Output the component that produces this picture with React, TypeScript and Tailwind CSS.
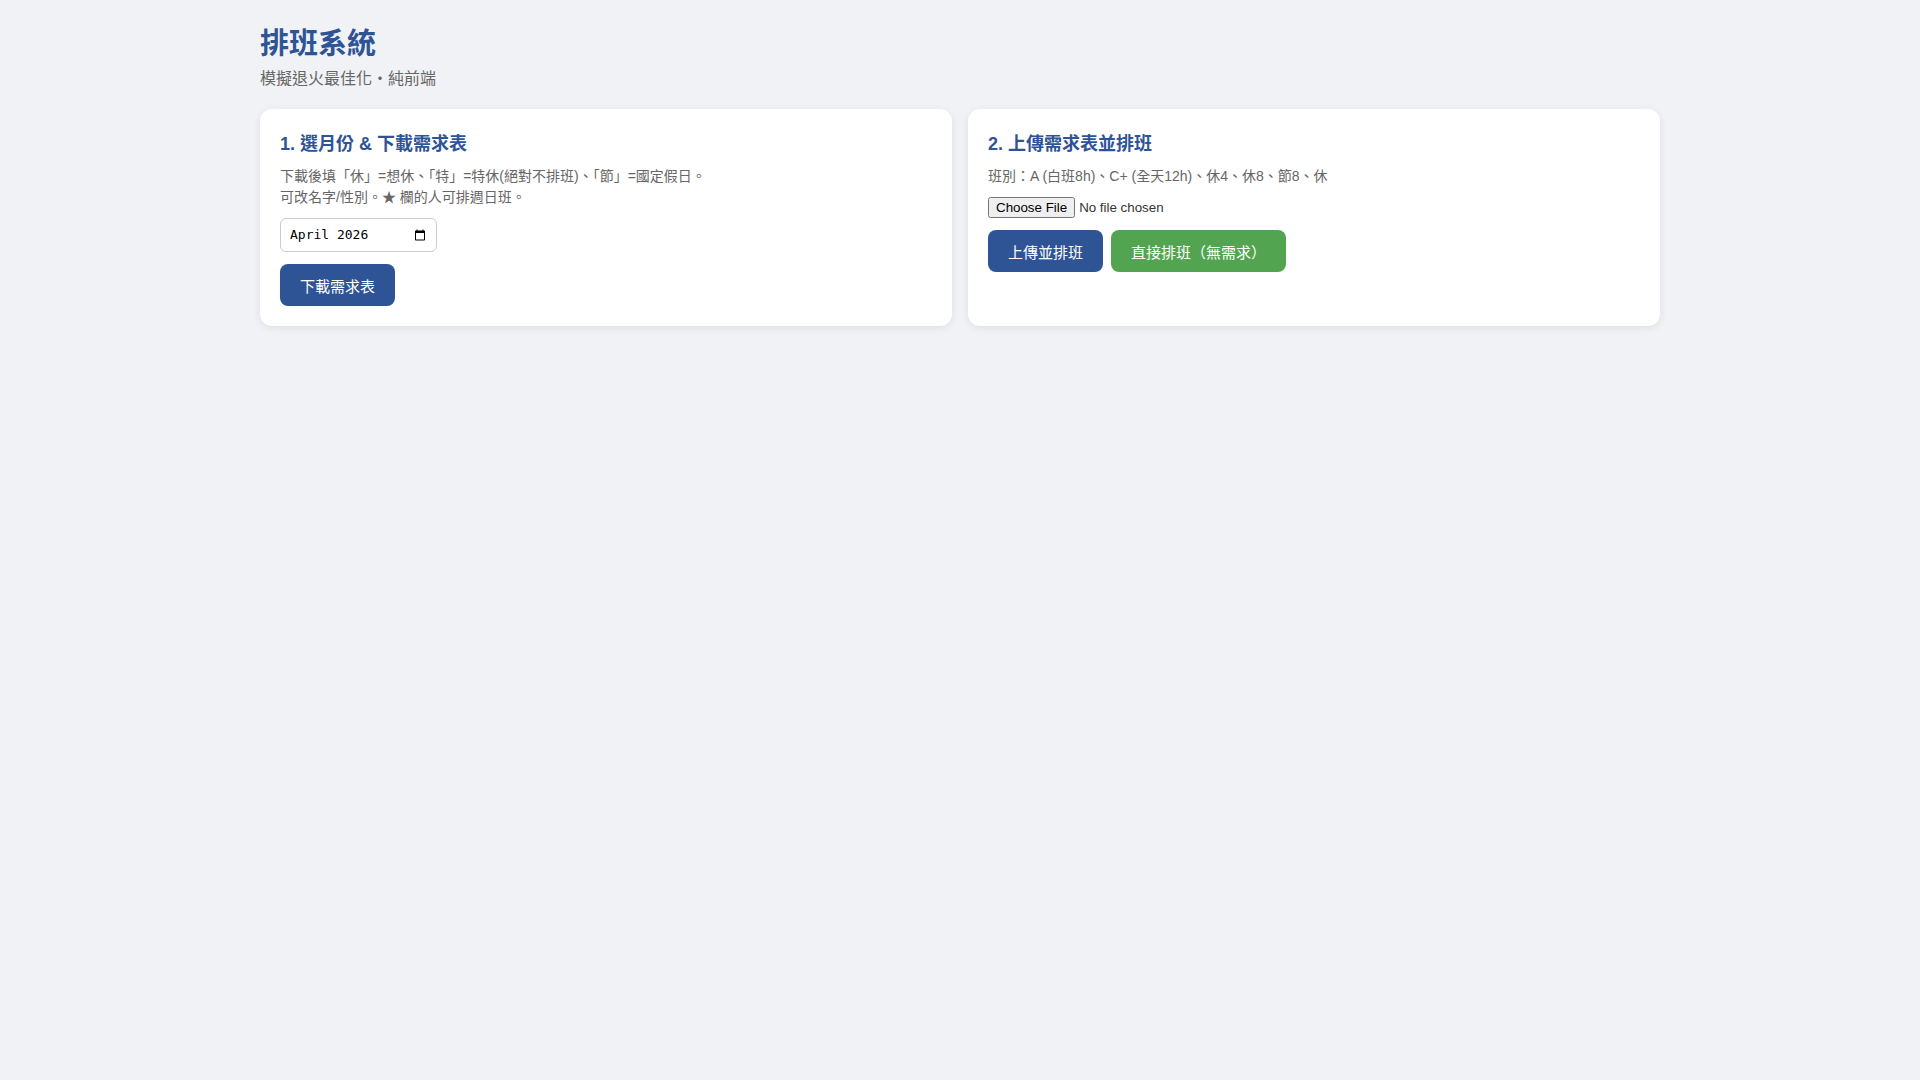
import React from "react";

const btn = "cursor-pointer rounded-lg px-5 pt-[11px] pb-2.5 text-[15px] text-white [line-height:normal]";
const card = "rounded-xl bg-white p-5 shadow-[0_2px_8px_rgba(0,0,0,0.08)]";
const heading = "mb-[11px] text-lg font-bold text-[#2f5496] [line-height:normal]";
const note = "mb-2.5 text-sm leading-[21px] text-[#666]";

function CalendarIcon() {
  return (
    <svg viewBox="0 0 24 24" className="block size-3" fill="currentColor" aria-hidden="true">
      <path d="M20 3h-1V1h-2v2H7V1H5v2H4c-1.1 0-2 .9-2 2v16c0 1.1.9 2 2 2h16c1.1 0 2-.9 2-2V5c0-1.1-.9-2-2-2zm0 18H4V8h16v13z" />
    </svg>
  );
}

export default function App() {
  return (
    <div
      lang="zh-TW"
      className="min-h-screen bg-[#f0f2f5] p-5 font-['Liberation_Sans','Noto_Sans_CJK_TC',sans-serif] text-[#333]"
    >
      <main className="mx-auto max-w-[1400px]">
        <h1 className="mb-[3px] text-[29px] font-bold text-[#2f5496] [line-height:normal]">排班系統</h1>
        <p className="mb-5 text-base text-[#666] [line-height:normal]">模擬退火最佳化・純前端</p>
        <div className="grid grid-cols-1 gap-4 md:grid-cols-2">
          <section className={card}>
            <h2 className={heading}>1. 選月份 &amp; 下載需求表</h2>
            <p className={note}>
              下載後填「休」=想休、「特」=特休(絕對不排班)、「節」=國定假日。
              <br />
              可改名字/性別。★ 欄的人可排週日班。
            </p>
            <div className="mb-3 flex h-[34px] w-[157px] items-center rounded-md border border-[#ccc] px-[9px] text-black">
              <input
                type="text"
                aria-label="月份"
                defaultValue="April 2026"
                className="min-w-0 flex-1 font-['DejaVu_Sans_Mono',monospace] text-[13px] outline-none"
              />
              <button type="button" aria-label="選擇月份" className="mr-px cursor-pointer">
                <CalendarIcon />
              </button>
            </div>
            <button type="button" className={`${btn} bg-[#2f5496]`}>下載需求表</button>
          </section>
          <section className={card}>
            <h2 className={heading}>2. 上傳需求表並排班</h2>
            <p className={note}>班別：A (白班8h)、C+ (全天12h)、休4、休8、節8、休</p>
            <input
              type="file"
              aria-label="需求表"
              className="mb-3 block [font:revert] file:[all:revert]"
            />
            <div className="flex flex-wrap gap-2">
              <button type="button" className={`${btn} bg-[#2f5496]`}>上傳並排班</button>
              <button type="button" className={`${btn} bg-[#53a451]`}>直接排班（無需求）</button>
            </div>
          </section>
        </div>
      </main>
    </div>
  );
}
